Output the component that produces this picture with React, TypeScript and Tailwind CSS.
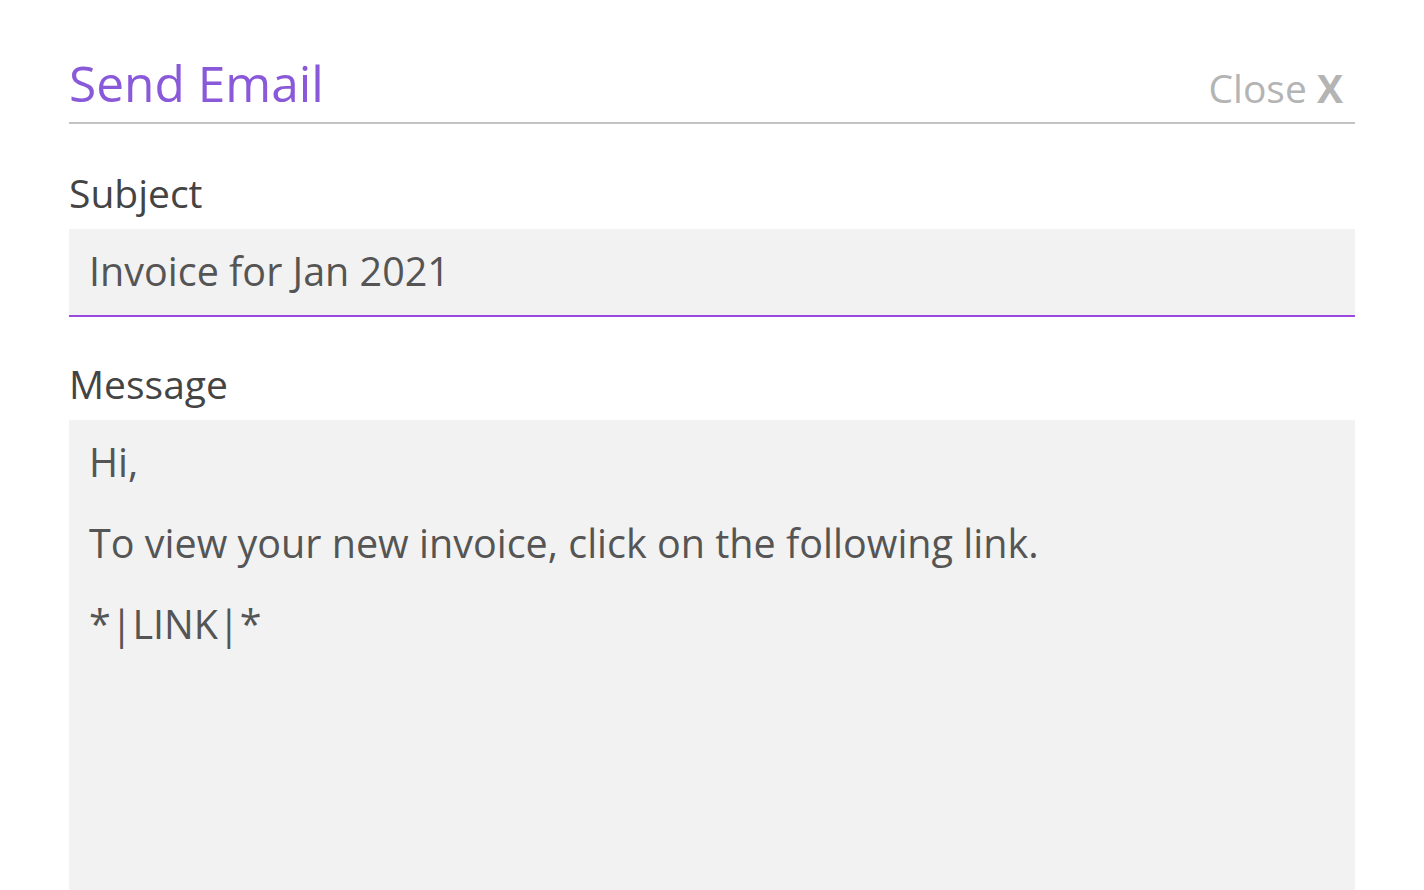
export default function App() {
  return (
    <div className="min-h-[890px] w-full bg-white px-[69px] pt-[52px]" style={{ fontFamily: '"Open Sans", sans-serif' }}>
      <div className="flex items-end justify-between border-b-2 border-[#c4c4c4] pb-[8px]">
        <h1 className="text-[49.6px] leading-[62px] text-[#8a59d9]">Send Email</h1>
        <button className="mb-[2px] mr-[12px] text-[39px] leading-[48px] text-[#b4b4b4]">
          Close <span className="font-bold">X</span>
        </button>
      </div>
      <label className="mt-[43px] block text-[39px] leading-[52px] text-[#444]">Subject</label>
      <div className="mt-[10px] flex h-[88px] items-center border-b-2 border-[#9b4ae0] bg-[#f2f2f2] px-[20px] text-[39.5px] text-[#555]">
        Invoice for Jan 2021
      </div>
      <label className="mt-[41px] block text-[39px] leading-[52px] text-[#444]">Message</label>
      <div className="mt-[10px] h-[480px] bg-[#f2f2f2] px-[20px] pt-[18px] text-[39.5px] leading-[48px] text-[#555]">
        <p>Hi,</p>
        <p className="mt-[33px]">To view your new invoice, click on the following link.</p>
        <p className="mt-[33px]">*|LINK|*</p>
      </div>
    </div>
  );
}
